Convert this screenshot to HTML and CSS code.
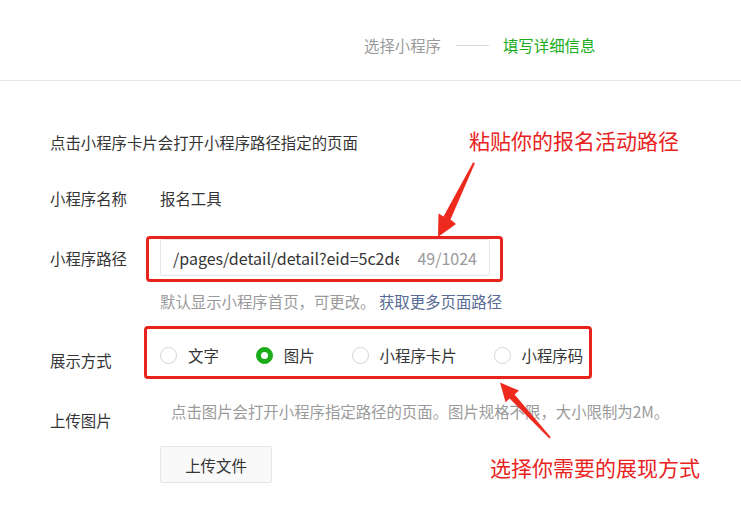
FILE: index.html
```html
<!DOCTYPE html>
<html lang="zh-CN">
<head>
<meta charset="utf-8">
<title>填写详细信息</title>
<link rel="stylesheet" href="styles.css">
</head>
<body>
<div class="page">
  <header class="steps">
    <span class="step">选择小程序</span>
    <span class="step-line"></span>
    <span class="step step-active">填写详细信息</span>
  </header>

  <main class="form">
    <p class="intro">点击小程序卡片会打开小程序路径指定的页面</p>

    <div class="row row-name">
      <span class="label">小程序名称</span>
      <span class="value">报名工具</span>
    </div>

    <div class="row row-path">
      <span class="label label-path">小程序路径</span>
      <div class="field">
        <div class="input">
          <span class="input-text">/pages/detail/detail?eid=5c2de1f0a8b3c40012345678</span>
          <span class="counter">49/1024</span>
        </div>
        <span class="mark mark-path"></span>
        <p class="hint">默认显示小程序首页，可更改。 <a class="link">获取更多页面路径</a></p>
      </div>
    </div>

    <div class="row row-display">
      <span class="label label-display">展示方式</span>
      <div class="radios">
        <label class="radio"><span class="dot"></span>文字</label>
        <label class="radio"><span class="dot dot-on"></span>图片</label>
        <label class="radio"><span class="dot"></span>小程序卡片</label>
        <label class="radio"><span class="dot"></span>小程序码</label>
        <span class="mark mark-display"></span>
      </div>
    </div>

    <div class="row row-upload">
      <span class="label label-upload">上传图片</span>
      <div class="upload">
        <p class="hint hint-upload">点击图片会打开小程序指定路径的页面。图片规格不限，大小限制为2M。</p>
        <button class="btn">上传文件</button>
      </div>
    </div>
  </main>

  <div class="note note-path">粘贴你的报名活动路径</div>
  <div class="note note-display">选择你需要的展现方式</div>

  <svg class="arrows" width="741" height="509" viewBox="0 0 741 509">
    <polygon fill="#ee2a1f" points="475,163 450.5,219.5 456,224 438,237 438.5,213.5 443.5,216.5 473,162.5"/>
    <polygon fill="#ee2a1f" points="550.8,437.2 514.6,394.6 519,390.6 500,382.5 505.6,402.2 509.6,398.6 549.4,438.6"/>
  </svg>
</div>
</body>
</html>
```

FILE: styles.css
```css
* { box-sizing: border-box; }
html, body { margin: 0; padding: 0; background: #fff; }
body {
  font-family: "Noto Sans CJK SC", "Microsoft YaHei", sans-serif;
  font-size: 15.4px;
  line-height: 22px;
  color: #353535;
}
.page {
  position: relative;
  width: 741px;
  height: 509px;
  overflow: hidden;
}
.steps {
  display: flex;
  align-items: center;
  height: 81px;
  padding: 10px 0 0 364px;
  border-bottom: 1px solid #e7e7eb;
}
.step { color: #9a9a9a; }
.step-active { color: #1aad19; }
.step-line {
  width: 33px;
  height: 1px;
  margin: 0 14px 0 15px;
  background: #d9d9d9;
}
.form { padding-left: 50px; }
.intro { margin: 50px 0 0; }
.row { display: flex; align-items: flex-start; }
.label { width: 110px; flex: none; }
.row-name { margin-top: 34px; }
.row-path { margin-top: 30px; }
.label-path { margin-top: 8px; }
.field { position: relative; }
.input {
  display: flex;
  align-items: center;
  width: 330px;
  height: 37px;
  padding: 0 12px;
  border: 1px solid #e7e7eb;
  border-radius: 2px;
  font-size: 16px;
}
.input-text {
  flex: 1;
  min-width: 0;
  overflow: hidden;
  white-space: nowrap;
  color: #353535;
}
.counter {
  flex: none;
  margin-left: 18px;
  color: #9a9a9a;
}
.hint { margin: 14px 0 0; color: #9a9a9a; }
.link { color: #576b95; }
.mark {
  position: absolute;
  border: 3px solid #e8231e;
  border-radius: 4px;
}
.mark-path { left: -14px; top: -3px; width: 357px; height: 46px; }
.row-display { margin-top: 32px; }
.label-display { margin-top: 5px; }
.radios { position: relative; display: flex; }
.radio { display: flex; align-items: center; margin-right: 37px; }
.dot {
  position: relative;
  width: 17px;
  height: 17px;
  margin-right: 11px;
  border: 1px solid #d6d6d6;
  border-radius: 50%;
}
.dot-on { background: #1aad19; border-color: #1aad19; }
.dot-on::after {
  content: "";
  position: absolute;
  left: 4px;
  top: 4px;
  width: 7px;
  height: 7px;
  border-radius: 50%;
  background: #fff;
}
.mark-display { left: -16px; top: -18px; width: 448px; height: 53px; }
.row-upload { margin-top: 29px; }
.label-upload { margin-top: 9px; }
.hint-upload { margin: 0 0 24px 11px; }
.btn {
  display: block;
  width: 112px;
  height: 37px;
  padding: 0;
  border: 1px solid #e5e5e5;
  border-radius: 2px;
  background: #f9f9f9;
  font: inherit;
  color: #353535;
}
.note {
  position: absolute;
  font-size: 21px;
  line-height: 28px;
  color: #e8231e;
}
.note-path { left: 469px; top: 126px; }
.note-display { left: 490px; top: 453px; }
.arrows { position: absolute; left: 0; top: 0; pointer-events: none; }
```
